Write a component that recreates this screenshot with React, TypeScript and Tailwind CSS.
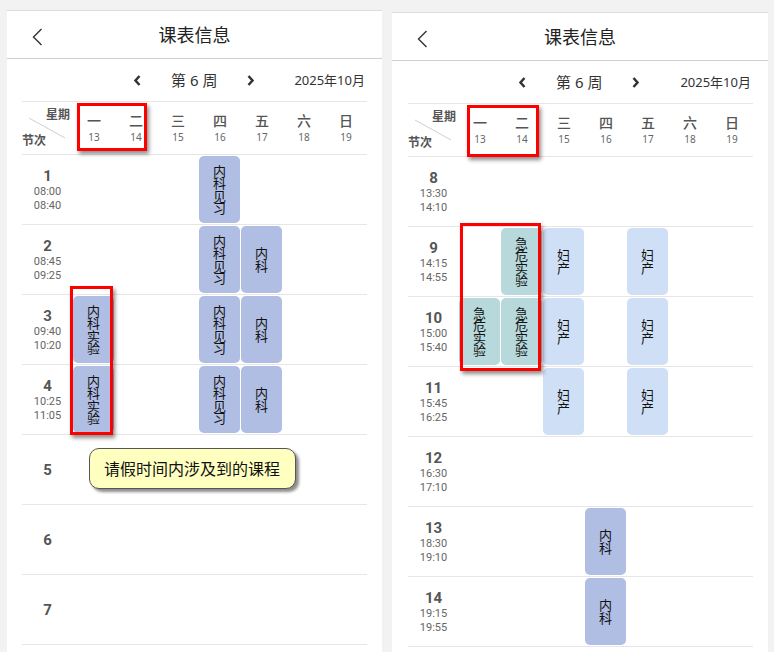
import React from "react";

type Blk = { col: number; text: string; color: string };
type Row = { n: number; t1?: string; t2?: string; blocks: Blk[] };

const LAV = "bg-[#b0bee3]";
const TEAL = "bg-[#b7d9dc]";
const LIGHT = "bg-[#cfe0f6]";

const leftRows: Row[] = [
  { n: 1, t1: "08:00", t2: "08:40", blocks: [{ col: 3, text: "内科见习", color: LAV }] },
  { n: 2, t1: "08:45", t2: "09:25", blocks: [{ col: 3, text: "内科见习", color: LAV }, { col: 4, text: "内科", color: LAV }] },
  { n: 3, t1: "09:40", t2: "10:20", blocks: [{ col: 0, text: "内科实验", color: LAV }, { col: 3, text: "内科见习", color: LAV }, { col: 4, text: "内科", color: LAV }] },
  { n: 4, t1: "10:25", t2: "11:05", blocks: [{ col: 0, text: "内科实验", color: LAV }, { col: 3, text: "内科见习", color: LAV }, { col: 4, text: "内科", color: LAV }] },
  { n: 5, blocks: [] },
  { n: 6, blocks: [] },
  { n: 7, blocks: [] },
];

const rightRows: Row[] = [
  { n: 8, t1: "13:30", t2: "14:10", blocks: [] },
  { n: 9, t1: "14:15", t2: "14:55", blocks: [{ col: 1, text: "急危实验", color: TEAL }, { col: 2, text: "妇产", color: LIGHT }, { col: 4, text: "妇产", color: LIGHT }] },
  { n: 10, t1: "15:00", t2: "15:40", blocks: [{ col: 0, text: "急危实验", color: TEAL }, { col: 1, text: "急危实验", color: TEAL }, { col: 2, text: "妇产", color: LIGHT }, { col: 4, text: "妇产", color: LIGHT }] },
  { n: 11, t1: "15:45", t2: "16:25", blocks: [{ col: 2, text: "妇产", color: LIGHT }, { col: 4, text: "妇产", color: LIGHT }] },
  { n: 12, t1: "16:30", t2: "17:10", blocks: [] },
  { n: 13, t1: "18:30", t2: "19:10", blocks: [{ col: 3, text: "内科", color: LAV }] },
  { n: 14, t1: "19:15", t2: "19:55", blocks: [{ col: 3, text: "内科", color: LAV }] },
];

const days = [
  ["一", "13"],
  ["二", "14"],
  ["三", "15"],
  ["四", "16"],
  ["五", "17"],
  ["六", "18"],
  ["日", "19"],
];

function BackIcon() {
  return (
    <svg width="11" height="18" viewBox="0 0 11 18" className="block">
      <polyline points="9.5,1 1.5,9 9.5,17" fill="none" stroke="#333" strokeWidth="1.4" />
    </svg>
  );
}

function NavChevron({ dir }: { dir: "l" | "r" }) {
  return (
    <svg width="9" height="11" viewBox="0 0 9 11" className="block">
      {dir === "l" ? (
        <polyline points="6.5,1 2.5,5.5 6.5,10" fill="none" stroke="#333" strokeWidth="2.5" />
      ) : (
        <polyline points="2.5,1 6.5,5.5 2.5,10" fill="none" stroke="#333" strokeWidth="2.5" />
      )}
    </svg>
  );
}

function Block({ text, color }: { text: string; color: string }) {
  return (
    <div
      className={`w-[41px] h-[67px] mt-[1px] rounded-[5px] flex items-center justify-center ${color}`}
    >
      <div className="w-[13px] break-all text-center text-[13px] leading-[12.5px] text-[#111]">{text}</div>
    </div>
  );
}

function TableRow({ row }: { row: Row }) {
  return (
    <div className="grid grid-cols-[51px_repeat(7,42px)] h-[70px] border-b border-[#e6e6e6]">
      <div className="flex flex-col items-center justify-center font-['Roboto',sans-serif]">
        <div className="text-[15px] font-bold leading-[18px] text-[#555]">{row.n}</div>
        {row.t1 && <div className="text-[11px] leading-[14px] text-[#666]">{row.t1}</div>}
        {row.t2 && <div className="text-[11px] leading-[14px] text-[#666]">{row.t2}</div>}
      </div>
      {Array.from({ length: 7 }).map((_, c) => {
        const b = row.blocks.find((x) => x.col === c);
        return <div key={c}>{b && <Block text={b.text} color={b.color} />}</div>;
      })}
    </div>
  );
}

function HeaderRow() {
  return (
    <div className="grid grid-cols-[51px_repeat(7,42px)] h-[54px] border-t border-b border-[#e6e6e6]">
      <div className="relative">
        <svg className="absolute left-0 top-0" width="51" height="52">
          <line x1="7" y1="16" x2="43" y2="36" stroke="#d0d0d0" strokeWidth="1" />
        </svg>
        <div className="absolute right-[3px] top-[5px] text-[12px] leading-[16px] font-bold text-[#555]">星期</div>
        <div className="absolute left-0 top-[31px] text-[12px] leading-[16px] font-bold text-[#555]">节次</div>
      </div>
      {days.map(([d, n]) => (
        <div key={d} className="flex flex-col items-center justify-center">
          <div className="text-[14px] leading-[18px] font-medium text-[#555]">{d}</div>
          <div className="text-[10px] leading-[14px] text-[#666]">{n}</div>
        </div>
      ))}
    </div>
  );
}

function RedBox({ cls }: { cls: string }) {
  return (
    <div
      className={`absolute border-[3px] border-[#ff0000] shadow-[2px_3px_4px_rgba(0,0,0,0.45)] pointer-events-none ${cls}`}
    />
  );
}

function Panel({
  rows,
  panelCls,
  tableCls,
  overlays,
}: {
  rows: Row[];
  panelCls: string;
  tableCls: string;
  overlays: React.ReactNode;
}) {
  return (
    <div className={`bg-white border-t border-[#dcdcdc] shrink-0 ${panelCls}`}>
      <div className="relative h-[48px] border-b border-[#cfcfcf] flex items-center justify-center">
        <div className="absolute left-[25px] top-[17px]">
          <BackIcon />
        </div>
        <div className="text-[18px] leading-[24px] text-[#222]">课表信息</div>
      </div>
      <div className="h-[42px] flex items-center pl-[126px] pr-[17px]">
        <NavChevron dir="l" />
        <div className="ml-[29px] text-[15px] leading-[20px] text-[#333]">第 6 周</div>
        <div className="ml-[29px]">
          <NavChevron dir="r" />
        </div>
        <div className="ml-auto text-[13px] leading-[18px] text-[#333]">2025年10月</div>
      </div>
      <div className={`relative w-[345px] ${tableCls}`}>
        <HeaderRow />
        {rows.map((r) => (
          <TableRow key={r.n} row={r} />
        ))}
        {overlays}
      </div>
    </div>
  );
}

export default function App() {
  return (
    <div className="w-[774px] h-[652px] overflow-hidden bg-[#f2f2f2] flex items-start font-['Noto_Sans','Noto_Sans_CJK_SC',sans-serif]">
      <Panel
        rows={leftRows}
        panelCls="ml-[7px] mt-[10px] w-[375px] h-[642px]"
        tableCls="ml-[15px]"
        overlays={
          <>
            <RedBox cls="left-[55px] top-[2px] w-[70px] h-[48px]" />
            <RedBox cls="left-[48px] top-[185px] w-[43px] h-[149px]" />
            <div className="absolute left-[67px] top-[347px] w-[207px] h-[41px] rounded-[10px] border border-[#555] bg-[#ffffc0] shadow-[3px_3px_3px_rgba(0,0,0,0.45)] flex items-center pl-[14px] text-[16px] leading-[20px] text-[#111]">
              请假时间内涉及到的课程
            </div>
          </>
        }
      />
      <Panel
        rows={rightRows}
        panelCls="ml-[10px] mt-[12px] w-[376px] h-[640px]"
        tableCls="ml-[16px]"
        overlays={
          <>
            <RedBox cls="left-[59px] top-[2px] w-[72px] h-[52px]" />
            <RedBox cls="left-[52px] top-[120px] w-[81px] h-[148px]" />
          </>
        }
      />
    </div>
  );
}
